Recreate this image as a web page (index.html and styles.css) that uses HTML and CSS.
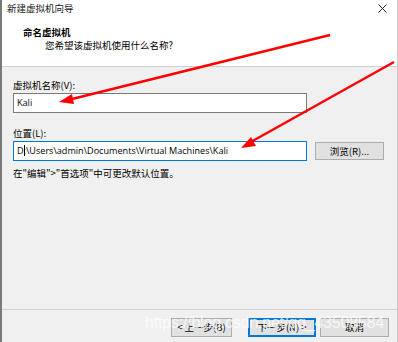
FILE: index.html
```html
<!DOCTYPE html>
<html lang="zh-CN">
<head>
    <meta charset="UTF-8">
    <title>新建虚拟机向导</title>
    <link rel="stylesheet" href="styles.css">
</head>
<body>
    <div class="window">
        <div class="titlebar">
            <span class="title">新建虚拟机向导</span>
            <svg class="close" viewBox="0 0 10 10" width="9" height="9">
                <path d="M0.5 0.5 L9.5 9.5 M9.5 0.5 L0.5 9.5" stroke="#222" stroke-width="1.1"/>
            </svg>
        </div>
        <div class="header">
            <div class="header-title">命名虚拟机</div>
            <div class="header-sub">您希望该虚拟机使用什么名称?</div>
        </div>
        <div class="content">
            <label class="field-label">虚拟机名称(V):</label>
            <div class="row">
                <div class="input">Kali</div>
            </div>
            <label class="field-label second">位置(L):</label>
            <div class="row">
                <div class="input focused">D<span class="caret"></span>:\Users\admin\Documents\Virtual Machines\Kali</div>
                <button class="btn browse">浏览(R)...</button>
            </div>
            <p class="hint">在"编辑"&gt;"首选项"中可更改默认位置。</p>
        </div>
        <div class="footer">
            <button class="btn nav back">&lt; 上一步(B)</button>
            <button class="btn nav primary">下一步(N) &gt;</button>
            <button class="btn nav cancel">取消</button>
        </div>

        <!-- annotation overlay -->
        <svg class="arrows" viewBox="0 0 398 342" width="398" height="342">
            <line x1="330" y1="35" x2="68" y2="100" stroke="#f00" stroke-width="2.5"/>
            <polygon points="59,102 72,94 74,104" fill="#f00"/>
            <line x1="394" y1="62" x2="249" y2="143" stroke="#f00" stroke-width="2.5"/>
            <polygon points="241,148 251,137 256,146" fill="#f00"/>
        </svg>
        <div class="watermark">https://blog.csdn.net/qq_43508584</div>
    </div>
</body>
</html>
```

FILE: styles.css
```css
* {
    box-sizing: border-box;
}

body {
    margin: 0;
    font-family: "Noto Sans CJK SC", "Noto Sans", sans-serif;
    font-size: 9.5px;
    color: #000;
    background: #f0f0f0;
}

.window {
    position: relative;
    width: 398px;
    height: 342px;
    display: flex;
    flex-direction: column;
    background: #f0f0f0;
    border-left: 2px solid #7a7a7a;
    border-right: 1px solid #c8c8c8;
    overflow: hidden;
}

.titlebar {
    height: 17px;
    background: #fff;
    display: flex;
    justify-content: space-between;
    align-items: center;
    padding: 0 10px 0 5px;
}

.title {
    line-height: 13px;
    color: #222;
}

.close {
    display: block;
}

.header {
    height: 50px;
    background: #fff;
    border-bottom: 1px solid #d0d0d0;
    padding: 9px 0 0 21px;
}

.header-title {
    font-weight: bold;
    line-height: 13px;
}

.header-sub {
    padding-left: 22px;
    line-height: 13px;
}

.content {
    flex: 1;
    padding: 11px 0 0 11px;
}

.field-label {
    display: block;
    line-height: 14px;
    margin-bottom: 1px;
}

.field-label.second {
    margin-top: 13px;
}

.row {
    display: flex;
    align-items: center;
    gap: 8px;
}

.input {
    width: 294px;
    height: 20px;
    border: 1px solid #7a7a7a;
    background: #fff;
    padding: 0 3px;
    font-family: "Open Sans", "Noto Sans", sans-serif;
    font-size: 9.1px;
    line-height: 18px;
    white-space: nowrap;
    overflow: hidden;
}

.input.focused {
    border-color: #0078d7;
}

.caret {
    display: inline-block;
    width: 1px;
    height: 11px;
    margin-right: -1px;
    background: #000;
    vertical-align: -2px;
}

.btn {
    font-family: "Noto Sans CJK SC", sans-serif;
    font-size: 9.5px;
    background: #e1e1e1;
    border: 1px solid #adadad;
    color: #000;
    padding: 0;
    height: 18px;
    line-height: 15px;
}

.browse {
    width: 69px;
}

.hint {
    margin: 5px 0 0;
    line-height: 14px;
}

.footer {
    height: 33px;
    border-top: 1px solid #d0d0d0;
    display: flex;
    justify-content: flex-end;
    align-items: flex-start;
    padding: 8px 8px 0 0;
}

.nav {
    height: 19px;
}

.back {
    width: 61px;
    margin-right: 16px;
}

.nav.primary {
    border: 2px solid #0078d7;
    width: 68px;
    margin-right: 4px;
}

.cancel {
    width: 69px;
}

.arrows {
    position: absolute;
    left: -2px;
    top: 0;
    pointer-events: none;
}

.watermark {
    position: absolute;
    left: 143px;
    top: 314px;
    font-family: "Liberation Sans", sans-serif;
    font-size: 16px;
    color: rgba(255, 255, 255, 0.75);
    letter-spacing: -0.2px;
    pointer-events: none;
}
```
